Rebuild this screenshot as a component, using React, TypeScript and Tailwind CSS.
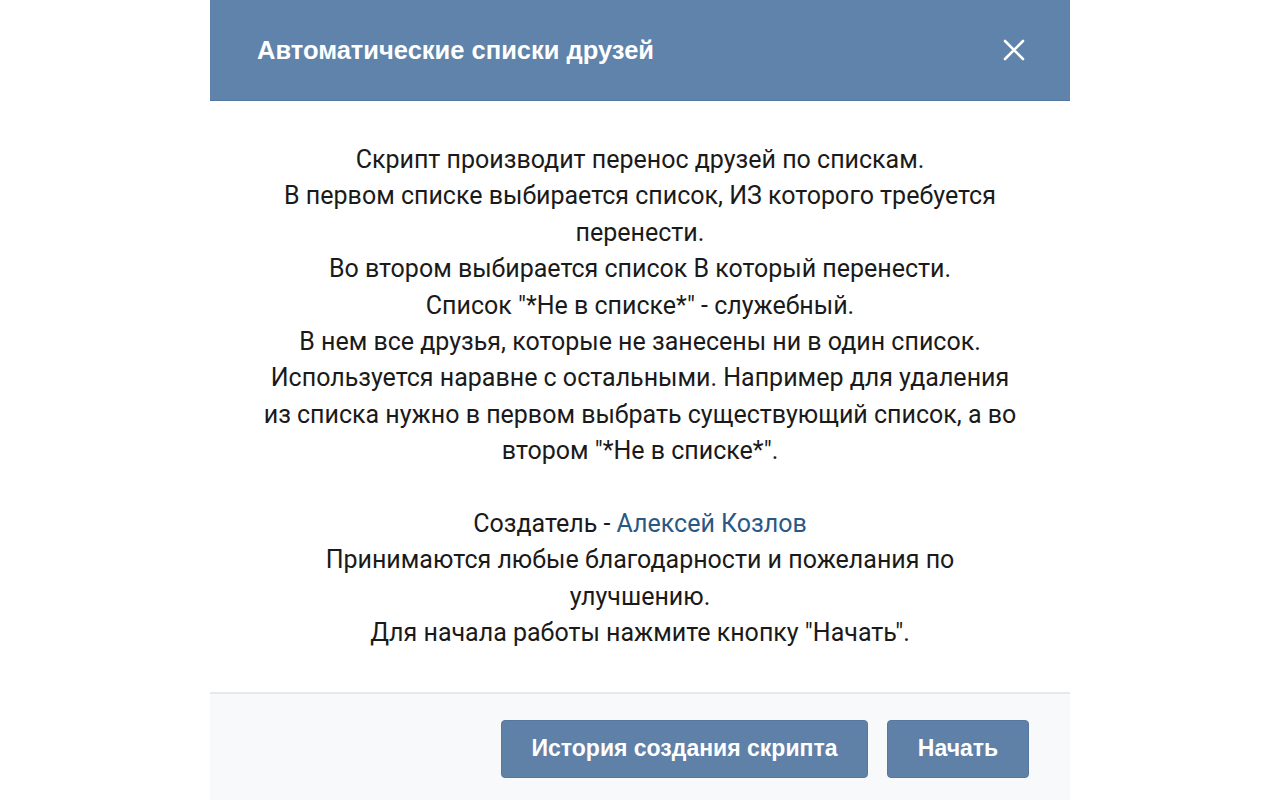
const lines1 = [
  "Скрипт производит перенос друзей по спискам.",
  "В первом списке выбирается список, ИЗ которого требуется",
  "перенести.",
  "Во втором выбирается список В который перенести.",
  'Список "*Не в списке*" - служебный.',
  "В нем все друзья, которые не занесены ни в один список.",
  "Используется наравне с остальными. Например для удаления",
  "из списка нужно в первом выбрать существующий список, а во",
  'втором "*Не в списке*".',
];

const lines2 = [
  "Принимаются любые благодарности и пожелания по",
  "улучшению.",
  'Для начала работы нажмите кнопку "Начать".',
];

const App = () => {
  return (
    <main className="min-h-screen w-full bg-white flex justify-center">
      <section className="w-[860px] flex flex-col">
        <header className="h-[101px] bg-[#5f83aa] border-b border-[#5478a0] flex items-center justify-between pl-[47px] pr-[45px]">
          <h1 className="text-white text-[25.5px] font-bold font-['Liberation_Sans',sans-serif]">
            Автоматические списки друзей
          </h1>
          <svg width="22" height="22" viewBox="0 0 22 22" className="text-white">
            <path d="M2 2 L20 20 M20 2 L2 20" stroke="currentColor" strokeWidth="2.6" strokeLinecap="round" />
          </svg>
        </header>
        <div className="pt-[41px] pb-[40px] px-4 text-center text-[25px] leading-[36.4px] text-[#1a1a1a] font-['Roboto',sans-serif]">
          {lines1.map((l) => (
            <p key={l}>{l}</p>
          ))}
          <p>&nbsp;</p>
          <p>
            Создатель - <span className="text-[#2a5885]">Алексей Козлов</span>
          </p>
          {lines2.map((l) => (
            <p key={l}>{l}</p>
          ))}
        </div>
        <footer className="flex-1 border-t-2 border-[#e7e8ec] bg-[#f8f9fb] flex justify-end items-start gap-[19px] pt-[26px] pr-[41px] pb-8">
          <button className="h-[58px] w-[367px] rounded-[4px] bg-[#5f81a8] border border-[#5677a0] text-white text-[23px] font-bold font-['Liberation_Sans',sans-serif]">
            История создания скрипта
          </button>
          <button className="h-[58px] w-[142px] rounded-[4px] bg-[#5f81a8] border border-[#5677a0] text-white text-[23px] font-bold font-['Liberation_Sans',sans-serif]">
            Начать
          </button>
        </footer>
      </section>
    </main>
  );
};

export default App;
